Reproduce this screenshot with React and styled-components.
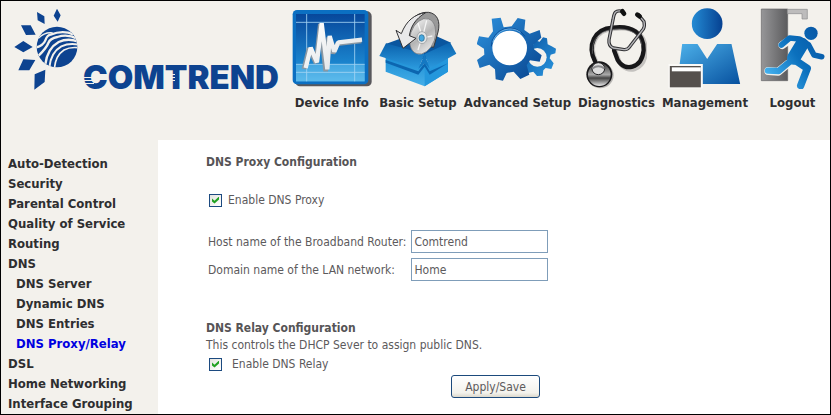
import React from "react";
import styled, { createGlobalStyle } from "styled-components";

const GlobalStyle = createGlobalStyle`
  *, *::before, *::after { box-sizing: border-box; }
  body {
    margin: 0;
    background: #f3f1ec;
    color: #5c5a5c;
    font: 12px/16px "DejaVu Sans Condensed", "DejaVu Sans", sans-serif;
  }
`;

const Page = styled.div`
  display: flex;
  flex-direction: column;
  min-height: 100vh;
  border: 1px solid #000;
`;

const Header = styled.header`
  display: flex;
  align-items: flex-start;
  justify-content: space-between;
  min-height: 139px;
  padding: 7px 0 0 12px;
`;

const LogoArt = styled.svg`
  display: block;
  flex: none;
  width: 272px;
  height: 96px;
  overflow: visible;
`;

const Wordmark = styled.text`
  font: 900 33px Inter, sans-serif;
  fill: #0d4390;
`;

const TopNav = styled.nav`
  display: flex;
  gap: 7px;
`;

const TopLink = styled.a`
  display: flex;
  flex-direction: column;
  align-items: center;
  gap: 5px;
  min-width: 75px;
  color: #2e2e30;
  font-size: 13px;
  font-weight: 700;
  line-height: 18px;
  text-decoration: none;
  white-space: nowrap;
`;

const IconArt = styled.svg`
  display: block;
  height: 81px;
`;

const Body = styled.div`
  display: flex;
  flex: 1;
`;

const SideNav = styled.nav`
  flex: none;
  width: 157px;
  padding: 14px 0 0 7px;
`;

const SideList = styled.ul`
  margin: 0;
  padding: 0 0 0 ${(p) => (p.$nested ? "8px" : "0")};
  list-style: none;
`;

const SideLink = styled.a`
  display: block;
  color: ${(p) => (p.$active ? "#0000e0" : "#2e2e30")};
  font-size: 13px;
  font-weight: 700;
  line-height: 20px;
  text-decoration: none;
  white-space: nowrap;
`;

const Content = styled.main`
  flex: 1;
  padding: 14px 16px 16px 48px;
  background: #fff;
`;

const Form = styled.form`
  display: flex;
  flex-direction: column;
  align-items: flex-start;
`;

const SectionTitle = styled.h2`
  margin: 0;
  color: #565456;
  font-size: 12px;
  font-weight: 700;
  line-height: 16px;
`;

const Description = styled.p`
  margin: 0;
  line-height: 18px;
`;

const CheckLabel = styled.label`
  display: flex;
  align-items: center;
  gap: ${(p) => p.$gap};
  margin-left: 3px;
  line-height: 20px;
`;

const CheckBox = styled.input`
  appearance: none;
  display: grid;
  place-items: center;
  width: 13px;
  height: 13px;
  margin: 0;
  border: 1px solid #1c4a80;
  background: linear-gradient(135deg, #e4e4df, #fff);

  &:checked::before {
    content: "";
    width: 7px;
    height: 7px;
    background: #21a121;
    clip-path: polygon(0 28%, 36% 60%, 100% 0, 100% 42%, 36% 100%, 0 70%);
  }
`;

const Fields = styled.div`
  display: grid;
  grid-template-columns: auto 137px;
  align-items: center;
  gap: 5px;
  margin: 20px 0 39px 2px;
`;

const TextBox = styled.input`
  width: 100%;
  height: 23px;
  padding: 0 2px;
  border: 1px solid #7f9db9;
  border-radius: 0;
  background: #fff;
  color: inherit;
  font: inherit;
`;

const ApplyButton = styled.button`
  width: 89px;
  height: 23px;
  margin: 1px 0 0 245px;
  padding: 0;
  border: 1px solid #1c4a7c;
  border-radius: 3px;
  background: linear-gradient(#fff, #f3f2ec 80%, #dcd8cc);
  color: inherit;
  font: inherit;
`;

const FirstSection = styled.div`
  display: grid;
  gap: 20px;
`;

function Logo() {
  return (
    <LogoArt viewBox="13 7 272 96" role="img" aria-label="Comtrend">
      <defs>
        <clipPath id="globe"><circle cx="171" cy="138" r="61" /></clipPath>
      </defs>
      <g transform="scale(0.33333)">
        <g fill="#0d4390">
          <path d="M111 33 133 46 134 69 113 58ZM171 23 182 43 173 62 161 44ZM63 73H92L107 101 78 102ZM43 138 70 120 98 138 70 154ZM70 175 106 177 88 208H55ZM104 220 136 206 134 243 103 266Z" />
          <circle cx="171" cy="138" r="61" />
        </g>
        <g clipPath="url(#globe)" fill="none" stroke="#f3f1ec">
          <path d="M114 112Q136 92 158 96" strokeWidth="5" />
          <path d="M106 140Q130 134 136 118T152 101Q188 86 220 100" strokeWidth="7" />
          <path d="M116 164Q140 140 145 126T172 108Q202 98 232 113" strokeWidth="7" />
          <path d="M136 190Q142 142 176 123 204 110 236 122" strokeWidth="7" />
          <path d="M148 200Q152 154 184 136 210 124 240 132" strokeWidth="6" />
          <path d="M163 204Q166 164 192 147 212 136 240 141" strokeWidth="5" />
        </g>
      </g>
      <Wordmark x="83" y="88">COMTREND</Wordmark>
      <path d="M82 76.500H94M82 79.500H94M82 82.500H94M167 73.500H175M167 76.500H175M167 79.500H175" stroke="#f3f1ec" />
    </LogoArt>
  );
}

function DeviceIcon() {
  return (
    <IconArt width="80" viewBox="24 24 240 243" aria-hidden="true">
      <defs>
        <linearGradient id="screen" x2="0" y2="1">
          <stop stopColor="#07479b" /><stop offset=".75" stopColor="#1b86cf" /><stop offset="1" stopColor="#58b7ea" />
        </linearGradient>
        <linearGradient id="trace" x2="1" y2="1"><stop stopColor="#fff" /><stop offset="1" stopColor="#dcdfe2" /></linearGradient>
      </defs>
      <rect x="34" y="34" width="229" height="225" rx="14" fill="#58585c" />
      <rect x="26" y="30" width="227" height="223" rx="13" fill="#0b6fc2" />
      <rect x="36" y="42" width="206" height="202" fill="url(#screen)" />
      <rect x="36" y="193" width="206" height="51" fill="#5fbcec" opacity=".6" />
      <path d="M36 67H242M36 193H242M36 217H242M68 42V244M212 42V244" stroke="#a4d4f3" strokeWidth="2.500" />
      <path d="M60 207 75 145 96 189 109 72 125 214 134 112 147 160 160 131 232 123" fill="none" stroke="#8b98a3" strokeWidth="14" strokeLinejoin="bevel" />
      <path d="M65 204 80 143 99 187 113 70 130 208 137 108 151 155 163 127 234 119" fill="none" stroke="url(#trace)" strokeWidth="13" strokeLinejoin="bevel" />
    </IconArt>
  );
}

function SetupIcon() {
  return (
    <IconArt width="78" viewBox="280 24 234 243" aria-hidden="true">
      <defs>
        <linearGradient id="box" x2="0" y2="1"><stop stopColor="#178bd3" /><stop offset="1" stopColor="#46afe8" /></linearGradient>
        <linearGradient id="flap" x2="0" y2="1"><stop stopColor="#0b62ad" /><stop offset="1" stopColor="#2b9ade" /></linearGradient>
        <linearGradient id="disc" x2="1" y2="1"><stop stopColor="#fafafa" /><stop offset=".5" stopColor="#b5b5b5" /><stop offset="1" stopColor="#f4f4f4" /></linearGradient>
      </defs>
      <path d="M300 165 417 195 487 165V215L417 259 300 215Z" fill="url(#box)" />
      <path d="M417 190 487 160V215L417 259Z" fill="#2497dc" />
      <path d="M300 180 398 214 417 188 432 214 487 190 432 224 417 200 398 224 300 188Z" fill="#0c66b0" />
      <path d="M300 132 366 108 446 106 496 128 417 180Z" fill="#0a569f" />
      <path d="M301 130 281 168 398 206 417 162Z" fill="url(#flap)" />
      <path d="M493 127 512 161 432 206 417 162Z" fill="url(#flap)" />
      <path d="M398 206 417 162 432 206 417 190Z" fill="#1478c2" />
      <path d="M362 94C374 52 400 35 429 37 455 41 465 64 457 96L444 142 390 130Z" fill="#999" stroke="#38383a" strokeWidth="3" />
      <ellipse cx="411" cy="109" rx="37" ry="55" transform="rotate(19 411 109)" fill="url(#disc)" stroke="#77777a" strokeWidth="2" />
      <path d="M397 69 405 95M423 61 414 97M440 108 419 112M397 150 405 124" stroke="#fff" strokeWidth="4" opacity=".8" />
      <ellipse cx="409" cy="113" rx="15" ry="18" fill="#e2e4e5" stroke="#909497" strokeWidth="2" />
      <ellipse cx="408" cy="114" rx="8" ry="10" fill="#45a8e0" stroke="#286282" strokeWidth="2" />
      <path d="M331 91 347 101C362 62 386 43 420 38 388 57 376 79 371 107L391 115 352 145Z" fill="#e9e9ea" stroke="#333335" strokeWidth="3" strokeLinejoin="round" />
    </IconArt>
  );
}

function GearsIcon() {
  return (
    <IconArt width="80" viewBox="49 24 240 243" aria-hidden="true">
      <defs>
        <linearGradient id="gear" x2="1" y2="1"><stop stopColor="#2d91dd" /><stop offset="1" stopColor="#07438d" /></linearGradient>
        <linearGradient id="smallGear" x2="1" y2="1"><stop stopColor="#0b56a3" /><stop offset="1" stopColor="#2b98e0" /></linearGradient>
      </defs>
      <path d="M222 121 237 125 247 112 259 115 261 133 273 139 286 146 284 160 270 164 267 175 279 190 272 207 255 204 248 211 246 227 229 228 218 215 202 219 192 205 199 185Z" fill="url(#smallGear)" />
      <circle cx="230" cy="172" r="28" fill="#f3f1ec" />
      <path d="M93 56 120 53 129 82 153 79 171 54 194 59 191 90 207 101 237 90 242 113 217 135 220 148 243 166 237 185 208 181 198 196 206 224 179 237 159 215 138 219 127 242 105 238 103 208 86 194 57 204 49 180 71 164 70 146 48 132 55 109 83 113 97 94Z" fill="url(#gear)" />
      <circle cx="147" cy="144" r="52" fill="#fff" />
      <path d="M92 139A55 55 0 0 1 193 109" fill="none" stroke="#0a4c98" strokeWidth="3" />
      <path d="M96 127A54 54 0 0 1 180 97" fill="none" stroke="#8ccaf3" strokeWidth="2" />
    </IconArt>
  );
}

function StethoscopeIcon() {
  return (
    <IconArt width="62" viewBox="372 24 186 243" aria-hidden="true">
      <defs>
        <linearGradient id="chest" x2="0" y2="1"><stop stopColor="#333" /><stop offset=".5" stopColor="#aaa" /><stop offset=".65" stopColor="#444" /><stop offset="1" stopColor="#e8e8e8" /></linearGradient>
      </defs>
      <g fill="none" strokeLinecap="round" strokeLinejoin="round">
        <path d="M403 184C377 137 399 86 455 83 515 74 552 99 551 154 545 211 494 220 472 183L460 151" stroke="#c4c2bf" strokeWidth="14" transform="translate(3 3)" />
        <path d="M402 184C378 137 399 86 455 83 513 75 549 99 548 151 542 207 490 216 470 180L459 151" stroke="#171719" strokeWidth="13" />
        <path d="M394 160C392 119 413 94 452 89 500 81 537 98 542 135" stroke="#747476" strokeWidth="2" />
        <path d="M485 34C463 28 459 39 456 59L444 119Q442 139 457 144L489 149Q500 150 507 139L547 87Q552 79 549 65L532 44" stroke="#303033" strokeWidth="10" />
        <path d="M485 34C463 28 459 39 456 59L444 119Q442 139 457 144L489 149Q500 150 507 139L547 87Q552 79 549 65L532 44" stroke="#b6b6b9" strokeWidth="4" />
        <path d="M484 34 489 41M529 44 536 49" stroke="#111" strokeWidth="14" />
      </g>
      <ellipse cx="418" cy="226" rx="40" ry="39" fill="#b7b5b2" />
      <ellipse cx="415" cy="223" rx="39" ry="39" fill="#18181a" />
      <ellipse cx="415" cy="224" rx="34" ry="34" fill="url(#chest)" />
      <ellipse cx="412" cy="206" rx="19" ry="18" fill="#ddd" stroke="#252527" strokeWidth="3" />
      <path d="M394 205Q412 193 430 205" fill="none" stroke="#8a8a8c" strokeWidth="6" />
    </IconArt>
  );
}

function ManagementIcon() {
  return (
    <IconArt width="73" viewBox="55 24 218 243" aria-hidden="true">
      <defs>
        <linearGradient id="head" x2="1" y2="0"><stop stopColor="#248bd4" /><stop offset="1" stopColor="#064191" /></linearGradient>
        <linearGradient id="torso" x2="1" y2="1"><stop stopColor="#4db1ea" /><stop offset="1" stopColor="#07519f" /></linearGradient>
      </defs>
      <circle cx="172" cy="71" r="46" fill="url(#head)" />
      <path d="M97 132H143L172 177 202 132H245L271 252H82Z" fill="url(#torso)" />
      <path d="M56 192H159V265H56Z" fill="#fbfaf7" />
      <path d="M60 198H153V262H60Z" fill="#55504d" />
      <path d="M66 202H153V214H66Z" fill="#fff" />
    </IconArt>
  );
}

function LogoutIcon() {
  return (
    <IconArt width="65" viewBox="334 24 195 243" aria-hidden="true">
      <defs>
        <linearGradient id="door" x2="1" y2="0"><stop stopColor="#969698" /><stop offset="1" stopColor="#5b5b5d" /></linearGradient>
        <linearGradient id="runner" x1="350" x2="526" y1="215" y2="100" gradientUnits="userSpaceOnUse"><stop stopColor="#43b1ef" /><stop offset=".5" stopColor="#0b70bd" /><stop offset="1" stopColor="#0756a4" /></linearGradient>
      </defs>
      <path d="M338 27H417V242H338Z" fill="url(#door)" stroke="#656567" strokeWidth="2" />
      <path d="M416 28H476V57H460V41H416Z" fill="#bdbcbc" stroke="#8b8b8c" strokeWidth="2" />
      <circle cx="487" cy="100" r="20" fill="url(#runner)" />
      <g fill="none" stroke="#f3f1ec" strokeLinecap="round" strokeLinejoin="round">
        <path d="M401 135 424 119 456 121M359 213 389 215 417 192" strokeWidth="24" />
      </g>
      <g fill="none" stroke="url(#runner)" strokeLinecap="round" strokeLinejoin="round">
        <path d="M398 135 423 114 452 117 480 135 496 165 519 170" strokeWidth="17" />
        <path d="M460 133 435 174" strokeWidth="40" />
        <path d="M358 212 390 213 420 188" strokeWidth="19" />
        <path d="M440 181 476 205 456 257" strokeWidth="22" />
      </g>
    </IconArt>
  );
}

const topItems = [
  ["Device Info", DeviceIcon],
  ["Basic Setup", SetupIcon],
  ["Advanced Setup", GearsIcon],
  ["Diagnostics", StethoscopeIcon],
  ["Management", ManagementIcon],
  ["Logout", LogoutIcon],
];

const sideItems = [
  { label: "Auto-Detection" },
  { label: "Security" },
  { label: "Parental Control" },
  { label: "Quality of Service" },
  { label: "Routing" },
  { label: "DNS", children: ["DNS Server", "Dynamic DNS", "DNS Entries", "DNS Proxy/Relay"] },
  { label: "DSL" },
  { label: "Home Networking" },
  { label: "Interface Grouping" },
];

const activeItem = "DNS Proxy/Relay";

export default function App() {
  return (
    <>
      <GlobalStyle />
      <Page>
        <Header>
          <Logo />
          <TopNav aria-label="Main">
            {topItems.map(([label, Icon]) => (
              <TopLink key={label} href="#"><Icon />{label}</TopLink>
            ))}
          </TopNav>
        </Header>
        <Body>
          <SideNav aria-label="Advanced setup">
            <SideList>
              {sideItems.map(({ label, children }) => (
                <li key={label}>
                  <SideLink href="#">{label}</SideLink>
                  {children && (
                    <SideList $nested>
                      {children.map((child) => (
                        <li key={child}>
                          <SideLink href="#" $active={child === activeItem}>{child}</SideLink>
                        </li>
                      ))}
                    </SideList>
                  )}
                </li>
              ))}
            </SideList>
          </SideNav>
          <Content>
            <Form onSubmit={(e) => e.preventDefault()}>
              <FirstSection>
                <SectionTitle>DNS Proxy Configuration</SectionTitle>
                <CheckLabel $gap="6px">
                  <CheckBox type="checkbox" defaultChecked />
                  Enable DNS Proxy
                </CheckLabel>
              </FirstSection>
              <Fields>
                <label htmlFor="host">Host name of the Broadband Router:</label>
                <TextBox id="host" type="text" defaultValue="Comtrend" />
                <label htmlFor="domain">Domain name of the LAN network:</label>
                <TextBox id="domain" type="text" defaultValue="Home" />
              </Fields>
              <SectionTitle>DNS Relay Configuration</SectionTitle>
              <Description>This controls the DHCP Sever to assign public DNS.</Description>
              <CheckLabel $gap="10px">
                <CheckBox type="checkbox" defaultChecked />
                Enable DNS Relay
              </CheckLabel>
              <ApplyButton type="submit">Apply/Save</ApplyButton>
            </Form>
          </Content>
        </Body>
      </Page>
    </>
  );
}
